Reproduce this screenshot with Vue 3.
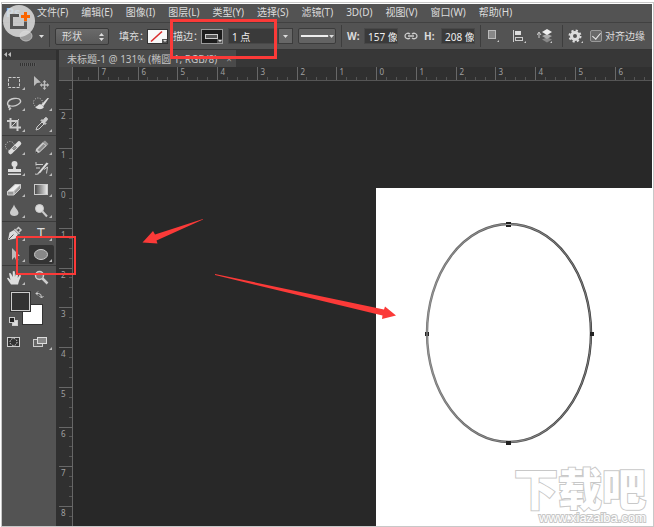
<script setup>
import { computed, onBeforeUnmount, onMounted, ref } from 'vue'

const menus = ['文件(F)', '编辑(E)', '图像(I)', '图层(L)', '类型(Y)', '选择(S)', '滤镜(T)', '3D(D)', '视图(V)', '窗口(W)', '帮助(H)']

const toolGroups = [
  ['marquee', 'move', 'lasso', 'quick-select', 'crop', 'eyedropper'],
  ['healing', 'pencil', 'stamp', 'history', 'eraser', 'gradient', 'blur', 'dodge'],
  ['pen', 'type', 'path', 'ellipse'],
  ['hand', 'zoom'],
]
const noCorner = ['move', 'zoom']
const activeTool = ref('ellipse')

const mode = ref('形状')
const strokeWidth = ref('1 点')
const shapeWidth = ref('157 像素')
const shapeHeight = ref('208 像素')
const alignEdges = ref(true)

const unit = 39.75
function buildTicks(zero, length) {
  const ticks = []
  const first = Math.ceil((-zero / unit) * 4)
  const last = Math.floor(((length - zero) / unit) * 4)
  for (let i = first; i <= last; i++) {
    const pos = Math.round(zero + (i * unit) / 4) + 0.5
    const major = i % 4 === 0
    ticks.push({ pos, major, label: major && pos < length - 10 ? String(Math.abs(i / 4)) : '' })
  }
  return ticks
}

const stage = ref(null)
const stageSize = ref({ w: 0, h: 0 })
const hTicks = computed(() => buildTicks(303, stageSize.value.w))
const vTicks = computed(() => buildTicks(107, stageSize.value.h))

function measure() {
  const box = stage.value.getBoundingClientRect()
  stageSize.value = { w: box.width - 14, h: box.height - 14 }
}
onMounted(() => {
  measure()
  window.addEventListener('resize', measure)
})
onBeforeUnmount(() => window.removeEventListener('resize', measure))
</script>

<template>
  <div class="page">
    <div class="window">
      <nav class="menubar" aria-label="菜单">
        <span class="brand">Ps</span>
        <button v-for="m in menus" :key="m" type="button" class="menu">{{ m }}</button>
      </nav>

      <div class="options">
        <button type="button" class="plain shape-tool" aria-label="椭圆工具">
          <svg width="30" height="14" viewBox="0 0 30 14">
            <ellipse cx="12" cy="7" rx="6" ry="5" fill="#999" stroke="#bbb" />
            <path d="M25 6h5l-2.500 3z" fill="#ddd" />
          </svg>
        </button>
        <i class="sep"></i>
        <span class="select-wrap">
          <select v-model="mode" class="mode" aria-label="工具模式">
            <option>形状</option>
            <option>路径</option>
            <option>像素</option>
          </select>
          <svg class="updown" width="5" height="8" viewBox="0 0 5 8"><path d="M0 3L2.500 0L5 3zM0 5h5L2.500 8z" fill="#ddd" /></svg>
        </span>
        <span class="pair">
          <label for="fill">填充：</label>
          <button id="fill" type="button" class="plain">
            <svg width="21" height="15" viewBox="0 0 21 15">
              <rect x=".5" y=".5" width="20" height="14" fill="#f8f8f8" stroke="#333" />
              <path d="M4 12.500L15 2.500" stroke="#d92b2b" stroke-width="1.600" />
              <path d="M15 10h5v4h-5z" fill="#555" /><path d="M16 11h4l-2 2z" fill="#ddd" />
            </svg>
          </button>
        </span>
        <span class="pair">
          <label for="stroke">描边：</label>
          <button id="stroke" type="button" class="plain">
            <svg width="22" height="15" viewBox="0 0 22 15">
              <rect x=".5" y=".5" width="21" height="14" fill="#1c1c1c" stroke="#999" />
              <rect x="4.500" y="5.500" width="12" height="4" fill="#555" stroke="#ccc" />
              <path d="M16 10h5v4h-5z" fill="#555" /><path d="M17 11h4l-2 2z" fill="#ddd" />
            </svg>
          </button>
        </span>
        <span class="combo">
          <input v-model="strokeWidth" class="field stroke-width" aria-label="描边宽度" />
          <button type="button" class="arrow" aria-label="描边宽度选项">
            <svg width="5" height="3" viewBox="0 0 5 3"><path d="M0 0h5L2.500 3z" fill="#ddd" /></svg>
          </button>
        </span>
        <button type="button" class="line-style" aria-label="描边类型">
          <svg width="37" height="14" viewBox="0 0 37 14"><path d="M2 7h28" stroke="#eee" stroke-width="2" /><path d="M31 6h5l-2.500 3z" fill="#ddd" /></svg>
        </button>
        <i class="sep"></i>
        <span class="pair size">
          <label for="w">W:</label>
          <input id="w" v-model="shapeWidth" class="field dim" />
        </span>
        <button type="button" class="plain" aria-label="链接宽高">
          <svg width="16" height="8" viewBox="0 0 16 8" fill="none" stroke="#ccc" stroke-width="1.300">
            <path d="M7 2C5 .5 2 1.500 2 4s3 3.500 5 2M9 2c2-1.500 5-.5 5 2S11 7.500 9 6M5 4h6" />
          </svg>
        </button>
        <span class="pair size">
          <label for="h">H:</label>
          <input id="h" v-model="shapeHeight" class="field dim" />
        </span>
        <i class="sep"></i>
        <span class="icons">
          <button type="button" class="plain" aria-label="路径操作">
            <svg width="14" height="16" viewBox="0 0 14 16"><rect x="1.500" y="2.500" width="7" height="8" fill="#888" stroke="#bbb" /><path d="M12 12v2h-2z" fill="#ccc" /></svg>
          </button>
          <button type="button" class="plain" aria-label="路径对齐方式">
            <svg width="14" height="16" viewBox="0 0 14 16"><path d="M1.500 2v12" stroke="#ccc" /><rect x="3" y="3" width="6" height="4" fill="#ddd" /><rect x="3.500" y="9.500" width="7" height="3" fill="none" stroke="#ccc" /><path d="M14 13v2h-2z" fill="#ccc" /></svg>
          </button>
          <button type="button" class="plain" aria-label="路径排列方式">
            <svg width="16" height="16" viewBox="0 0 16 16"><path d="M2 10V5M0 7l2-3l2 3" fill="none" stroke="#ccc" /><path d="M5 11.500l5-2l5 2l-5 3z" fill="#888" /><path d="M5 8l5-2l5 2l-5 3z" fill="#aaa" /><path d="M5 4l5-3l5 3l-5 3z" fill="#eee" /><path d="M15 13v2h-2z" fill="#ccc" /></svg>
          </button>
        </span>
        <i class="sep"></i>
        <button type="button" class="plain" aria-label="设置">
          <svg width="17" height="16" viewBox="0 0 17 16">
            <circle cx="7" cy="8" r="3.500" fill="none" stroke="#ddd" stroke-width="3" />
            <circle cx="7" cy="8" r="5.500" fill="none" stroke="#ddd" stroke-width="2" stroke-dasharray="2.200 2.120" />
            <path d="M15 13v2h-2z" fill="#ccc" />
          </svg>
        </button>
        <label class="check"><input v-model="alignEdges" type="checkbox" /><span>对齐边缘</span></label>
      </div>

      <div class="main">
        <aside class="tools" aria-label="工具">
          <div class="tools-head">
            <svg width="7" height="5" viewBox="0 0 7 5"><path d="M3 0v5L0 2.500zM7 0v5L4 2.500z" fill="#bbb" /></svg>
          </div>
          <div class="grip"></div>
          <div v-for="(group, gi) in toolGroups" :key="gi" class="group">
            <button
              v-for="t in group"
              :key="t"
              type="button"
              class="tool"
              :class="{ active: t === activeTool }"
              :aria-label="t"
              @click="activeTool = t"
            >
              <svg width="25" height="19" viewBox="0 0 25 19" fill="none" stroke="#ccc">
                <rect v-if="t === 'marquee'" x="6.500" y="4.500" width="11" height="10" stroke-dasharray="3 1.200" />
                <g v-else-if="t === 'move'" stroke="none" fill="#bbb">
                  <path d="M5 3v10l3-3L12 9.500z" />
                  <path d="M15.500 7l2 2.200h-1.300v2H18V10l2.300 2l-2.300 2v-1.200h-1.800v2h1.300l-2 2.200l-2-2.200h1.300v-2H13V14l-2.300-2L13 10v1.200h1.800v-2h-1.300z" />
                </g>
                <g v-else-if="t === 'lasso'">
                  <path d="M8 12.500C4 11 5 5.500 12 4.500C19 3.500 20.500 8 16 10.500C13 12.500 9 12.500 7.500 11.500C5.500 12.500 7 15 9 14L7 16" stroke-width="1.400" />
                </g>
                <g v-else-if="t === 'quick-select'">
                  <circle cx="9" cy="8.500" r="4.500" stroke-dasharray="1 1.500" />
                  <path d="M12 11l6.500-7h1.500L14.500 12z" fill="#ddd" stroke="none" />
                  <path d="M6 13c3 0 3-3.500 6-2.500l3 2.500c-2 3-6 3-9 0z" fill="#ddd" stroke="none" />
                </g>
                <g v-else-if="t === 'crop'" stroke-width="2">
                  <path d="M8.500 3v9.500H19M5 6h10.500v10" /><path d="M9 12l8-8" stroke-width="1" />
                </g>
                <g v-else-if="t === 'eyedropper'">
                  <path d="M7 15l1-3l5-5l2 2l-5 5z" /><path d="M12 5.500l4 4l1-1l-1-1l2.500-3q0-2-2-2l-2.500 3l-1-1z" fill="#ccc" />
                </g>
                <g v-else-if="t === 'healing'">
                  <circle cx="8" cy="8" r="4.500" stroke-dasharray="1 1.500" />
                  <path d="M8.500 14L17 5.500" stroke="#ddd" stroke-width="4.500" stroke-linecap="round" /><path d="M10.500 10.500l2.500-2.500l1.500 1.500l-2.500 2.500z" fill="#999" stroke="#888" />
                </g>
                <g v-else-if="t === 'pencil'" stroke="none">
                  <path d="M6 16l1-5l7-7l4 3.500l-7.500 7z" fill="#ccc" /><path d="M8.500 12l6-6l2 1.500l-6 6z" fill="#888" /><path d="M6 16l.8-3l2.200 2z" fill="#333" /><path d="M14 4l2-1.500l3.500 3.500l-1.500 1.500z" fill="#999" />
                </g>
                <g v-else-if="t === 'stamp'" fill="#ddd" stroke="none">
                  <circle cx="12.500" cy="5" r="3" /><path d="M11.500 6h2l.5 4h5v3H6v-3h5zM6 14.500h13V16H6z" />
                </g>
                <g v-else-if="t === 'history'">
                  <path d="M7 5.500h7M7 3v3.500M7 9h4M6 15c3 1 5-1 6-3" /><path d="M8 15L17.500 3.500l2 1l-8 9z" fill="#ddd" stroke="none" /><path d="M15 10.500l3.500-2.500l-1 6.500" />
                </g>
                <g v-else-if="t === 'eraser'">
                  <path d="M5.500 11.500L13 4.500h5.500l-6.500 7z" fill="#eee" /><path d="M5.500 11.500h6.500v3.500H5.500zM12 15l6.500-6.500v-4l-6.500 7z" fill="#999" />
                </g>
                <g v-else-if="t === 'gradient'">
                  <defs><linearGradient id="ramp"><stop stop-color="#444" /><stop offset="1" stop-color="#eee" /></linearGradient></defs>
                  <rect x="5.500" y="4.500" width="13" height="10" fill="url(#ramp)" />
                </g>
                <path v-else-if="t === 'blur'" d="M12 3.500c1 3.500 4.500 5.500 4.500 8.500c0 4-8.500 4-8.500 0C8 9 11 7 12 3.500z" fill="#ccc" stroke="none" />
                <g v-else-if="t === 'dodge'">
                  <circle cx="10.500" cy="7.500" r="4" fill="#ddd" /><path d="M13.500 10.500l4.500 5" stroke-width="2" />
                </g>
                <g v-else-if="t === 'pen'">
                  <path d="M6 16l1.500-7.500l4.500-2.500l4 4l-2.500 4.500z" fill="#ddd" stroke="none" /><path d="M7 15l4.500-4.500" stroke="#555" /><path d="M12.500 5l5 5M14.500 5.500l2-2l2.500 2.500l-2 2" stroke-width="1.500" />
                </g>
                <text v-else-if="t === 'type'" x="12" y="14" class="t-glyph">T</text>
                <path v-else-if="t === 'path'" d="M10 3v12l2.500-3l2 4l2-1l-2-4h3.500z" fill="#bbb" stroke="none" />
                <ellipse v-else-if="t === 'ellipse'" cx="12" cy="9.500" rx="6.500" ry="5" fill="#888" />
                <path v-else-if="t === 'hand'" d="M9 16.500L5 10.500q1-1.500 2.500.5l1 1L7 5.500q1.200-1.200 2.200.5L10.800 9L10.700 3.500q1.200-1.200 2.200 0V9l1.300-4.500q1.700-.8 1.900.8L15.700 10l1.800-3q1.700-.2 1.400 1.200L17 13l-1 3.500z" fill="#ddd" stroke="none" />
                <g v-else-if="t === 'zoom'">
                  <circle cx="10.500" cy="7.500" r="4" fill="#777" stroke-width="1.500" /><path d="M13.500 10.500l5 5" stroke-width="2.500" />
                </g>
                <path v-if="!noCorner.includes(t)" d="M23 14v3h-3z" fill="#bbb" stroke="none" />
              </svg>
            </button>
          </div>
          <div class="colors">
            <svg width="54" height="38" viewBox="0 0 54 38">
              <rect x="20.500" y="14.500" width="20" height="20" fill="#fff" stroke="#333" />
              <rect x="8.500" y="1.500" width="20" height="20" fill="#555" stroke="#333" />
              <rect x="9.500" y="2.500" width="18" height="18" fill="#323232" stroke="#ccc" />
              <path d="M34 3.500h2.500q3 0 3 4M36 1.500l-2 2l2 2M37.500 6l2 2l2-2" fill="none" stroke="#ccc" />
              <rect x="10.500" y="30.500" width="5" height="5" fill="#ddd" stroke="#ccc" />
              <rect x="7.500" y="27.500" width="5" height="5" fill="#222" stroke="#ccc" />
            </svg>
          </div>
          <div class="modes">
            <button type="button" class="tool" aria-label="快速蒙版">
              <svg width="25" height="19" viewBox="0 0 25 19"><rect x="5.500" y="4.500" width="12" height="9" fill="#333" stroke="#ccc" /><circle cx="11.500" cy="9" r="3.500" fill="none" stroke="#ddd" stroke-dasharray="1.500 1.200" /></svg>
            </button>
            <button type="button" class="tool" aria-label="屏幕模式">
              <svg width="25" height="19" viewBox="0 0 25 19"><rect x="4.500" y="6.500" width="9" height="7" fill="#666" stroke="#ccc" /><rect x="8.500" y="4.500" width="9" height="6" fill="#888" stroke="#ddd" /><path d="M23 14v3h-3z" fill="#bbb" /></svg>
            </button>
          </div>
        </aside>

        <section class="document">
          <div class="tabs">
            <button type="button" class="tab"><span>未标题-1 @ 131% (椭圆 1, RGB/8)</span><span class="close">×</span></button>
          </div>
          <div ref="stage" class="stage">
            <div class="corner"></div>
            <svg class="ruler-h" aria-hidden="true">
              <g v-for="t in hTicks" :key="t.pos">
                <path :d="`M${t.pos} ${t.major ? 0 : 10}V13`" :class="{ major: t.major }" />
                <text v-if="t.label" :x="t.pos + 3" y="8">{{ t.label }}</text>
              </g>
            </svg>
            <svg class="ruler-v" aria-hidden="true">
              <g v-for="t in vTicks" :key="t.pos">
                <path :d="`M${t.major ? 0 : 10} ${t.pos}H13`" :class="{ major: t.major }" />
                <text v-if="t.label" x="2" :y="t.pos + 9">{{ t.label }}</text>
              </g>
            </svg>
            <div class="canvas">
              <div class="artboard">
                <svg width="200" height="260" viewBox="0 0 200 260">
                  <defs><linearGradient id="edge"><stop stop-color="#777" /><stop offset="1" stop-color="#3c3c3c" /></linearGradient></defs>
                  <ellipse cx="133" cy="145" rx="82" ry="109" fill="none" stroke="url(#edge)" stroke-width="2.400" />
                  <ellipse cx="133" cy="145" rx="82" ry="109" fill="none" stroke="#aaa" stroke-width=".6" />
                  <path d="M130 34h5v5h-5zM49 144h4v4h-4zM214 144h4v4h-4zM130 253h5v4h-5z" fill="#222" />
                  <path d="M130 36.500h5M51 144v4" stroke="#aaa" />
                </svg>
                <div class="watermark">
                  <strong>下载吧</strong>
                  <span>www.xiazaiba.com</span>
                </div>
              </div>
            </div>
          </div>
        </section>
      </div>
    </div>

    <svg class="notes" aria-hidden="true">
      <g fill="none" stroke="#fb3a38">
        <rect x="171.500" y="20.500" width="104" height="37" stroke-width="3" />
        <rect x="17" y="237" width="58" height="37" stroke-width="2" />
      </g>
      <g fill="#fb3a38">
        <path d="M203 219L155 234.500L153 231L142.500 242.500L157.500 243.500L156.500 240.500L203 219.500z" />
        <path d="M215 274L384 309.500L385 306.500L396 315.500L382 319L382.500 315.500L215 275z" />
      </g>
      <circle cx="19" cy="21" r="16" fill="#ddd" fill-opacity=".85" />
      <path d="M19 15.500H11.500V27.500H25.500V21.500" fill="none" stroke="#555" stroke-width="3" />
      <path d="M25.500 12v9M21 16.500h9" stroke="#fa6400" stroke-width="3" />
    </svg>
  </div>
</template>

<style>
body {
  margin: 0;
  background: #fff;
}
</style>

<style scoped>
.page {
  position: relative;
  box-sizing: border-box;
  height: 100vh;
  padding: 2px 0 0 1px;
  font: 10px/14px "Noto Sans", "Noto Sans CJK SC", sans-serif;
  color: #dcdcdc;
}
.page * {
  box-sizing: border-box;
}
svg {
  display: block;
}
button,
input,
select {
  margin: 0;
  padding: 0;
  border: 0;
  border-radius: 0;
  background: none;
  font: inherit;
  color: inherit;
}
.window {
  height: 100%;
  display: flex;
  flex-direction: column;
  padding: 1px 1px 0 0;
  border: 1px solid #c8c8c8;
}
.menubar {
  flex: none;
  display: flex;
  align-items: center;
  gap: 13px;
  height: 18px;
  padding-bottom: 3px;
  background: #535353;
  white-space: nowrap;
}
.brand {
  width: 22px;
  padding-left: 4px;
  font-size: 13px;
  font-weight: bold;
  color: #8fc4ee;
}
.options {
  flex: none;
  display: flex;
  align-items: center;
  gap: 5px;
  height: 28px;
  padding: 0 8px 0 12px;
  background: #535353;
  border-top: 1px solid #414141;
  border-bottom: 1px solid #353535;
  white-space: nowrap;
}
.options > * {
  flex: none;
}
.sep {
  width: 1px;
  height: 22px;
  background: #3d3d3d;
}
.select-wrap {
  position: relative;
  margin-right: 5px;
}
.mode {
  appearance: none;
  width: 54px;
  height: 17px;
  padding-left: 6px;
  border: 1px solid #393939;
  border-radius: 2px;
  background: linear-gradient(#6a6a6a, #595959);
}
.updown {
  position: absolute;
  right: 5px;
  top: 5px;
  pointer-events: none;
}
.pair {
  display: flex;
  align-items: center;
}
.pair label {
  width: 28px;
}
.size label {
  width: 17px;
  font-weight: bold;
}
.combo {
  display: flex;
}
.field {
  height: 16px;
  padding-left: 3px;
  border: 1px solid #484848;
  background: #3a3a3a;
  color: #eee;
}
.stroke-width {
  width: 50px;
}
.dim {
  width: 34px;
}
.arrow {
  display: grid;
  place-items: center;
  width: 15px;
  height: 16px;
  border: 1px solid #3c3c3c;
  background: #676767;
}
.line-style {
  border: 1px solid #3c3c3c;
  border-radius: 2px;
  background: #636363;
}
.line-style svg {
  width: 36px;
}
.icons {
  display: flex;
  gap: 11px;
  padding: 0 4px 0 1px;
}
.check {
  display: flex;
  align-items: center;
  gap: 3px;
}
.check input {
  appearance: none;
  width: 12px;
  height: 12px;
  border: 1px solid #999;
  border-radius: 2px;
  background: #6a6a6a;
  position: relative;
}
.check input:checked::after {
  content: "";
  position: absolute;
  left: 3px;
  top: 0;
  width: 4px;
  height: 7px;
  border: solid #eee;
  border-width: 0 1px 1px 0;
  transform: rotate(40deg);
}
.main {
  flex: 1;
  min-height: 0;
  display: flex;
}
.tools {
  flex: none;
  width: 57px;
  border-right: 3px solid #303030;
  background: #535353;
}
.tools-head {
  height: 10px;
  padding: 2px;
  background: #3b3b3b;
}
.grip {
  width: 16px;
  height: 3px;
  margin: 3px 0 6px 18px;
  background: repeating-linear-gradient(90deg, #333 0 1px, #5c5c5c 1px 2px);
}
.group,
.modes {
  display: grid;
  grid-template-columns: 27px 27px;
  grid-auto-rows: 21px;
}
.group + .group {
  border-top: 1px solid #3b3b3b;
  padding-top: 1px;
}
.tool {
  display: grid;
  place-items: center;
  width: 25px;
  height: 19px;
  margin: 1px 0;
  border-radius: 2px;
}
.tool svg {
  overflow: visible;
}
.tool.active {
  background: #333;
}
.t-glyph {
  font: 14px "Noto Sans", sans-serif;
  text-anchor: middle;
  fill: #ddd;
  stroke: none;
}
.colors {
  padding: 2px 0 4px;
}
.document {
  flex: 1;
  min-width: 0;
  display: flex;
  flex-direction: column;
}
.tabs {
  flex: none;
  display: flex;
  height: 17px;
  background: #373737;
}
.tab {
  display: flex;
  gap: 9px;
  padding: 2px 4px 0 8px;
  background: #4a4a4a;
  color: #c4c4c4;
  white-space: nowrap;
}
.close {
  color: #999;
}
.stage {
  flex: 1;
  min-height: 0;
  display: grid;
  grid-template: 14px 1fr / 14px 1fr;
}
.corner {
  background: #444;
  border: solid #666;
  border-width: 0 1px 1px 0;
}
.ruler-h,
.ruler-v {
  width: 100%;
  height: 100%;
  overflow: hidden;
  background: #303030;
}
.ruler-h {
  border-bottom: 1px solid #555;
}
.ruler-v {
  border-right: 1px solid #666;
}
.ruler-h path,
.ruler-v path {
  stroke: #555;
}
.ruler-h path.major,
.ruler-v path.major {
  stroke: #686868;
}
.ruler-h text,
.ruler-v text {
  font: 8px "Noto Sans", sans-serif;
  fill: #a0a0a0;
}
.canvas {
  position: relative;
  overflow: hidden;
  background: #282828;
}
.artboard {
  position: absolute;
  left: 303px;
  top: 107px;
  right: 0;
  bottom: 0;
  background: #fff;
}
.artboard > svg {
  overflow: visible;
}
.watermark {
  position: absolute;
  right: 6px;
  bottom: 2px;
  display: flex;
  flex-direction: column;
  align-items: flex-end;
  gap: 3px;
  color: #fff;
  paint-order: stroke fill;
}
.watermark strong {
  font: 900 44px/44px "Noto Sans CJK SC", sans-serif;
  -webkit-text-stroke: 2px #c8c8c8;
}
.watermark span {
  font: 13px/12px "Liberation Sans", sans-serif;
  -webkit-text-stroke: 2px #c8c8c8;
}
.notes {
  position: absolute;
  left: 0;
  top: 0;
  width: 100%;
  height: 100%;
  pointer-events: none;
}
</style>
